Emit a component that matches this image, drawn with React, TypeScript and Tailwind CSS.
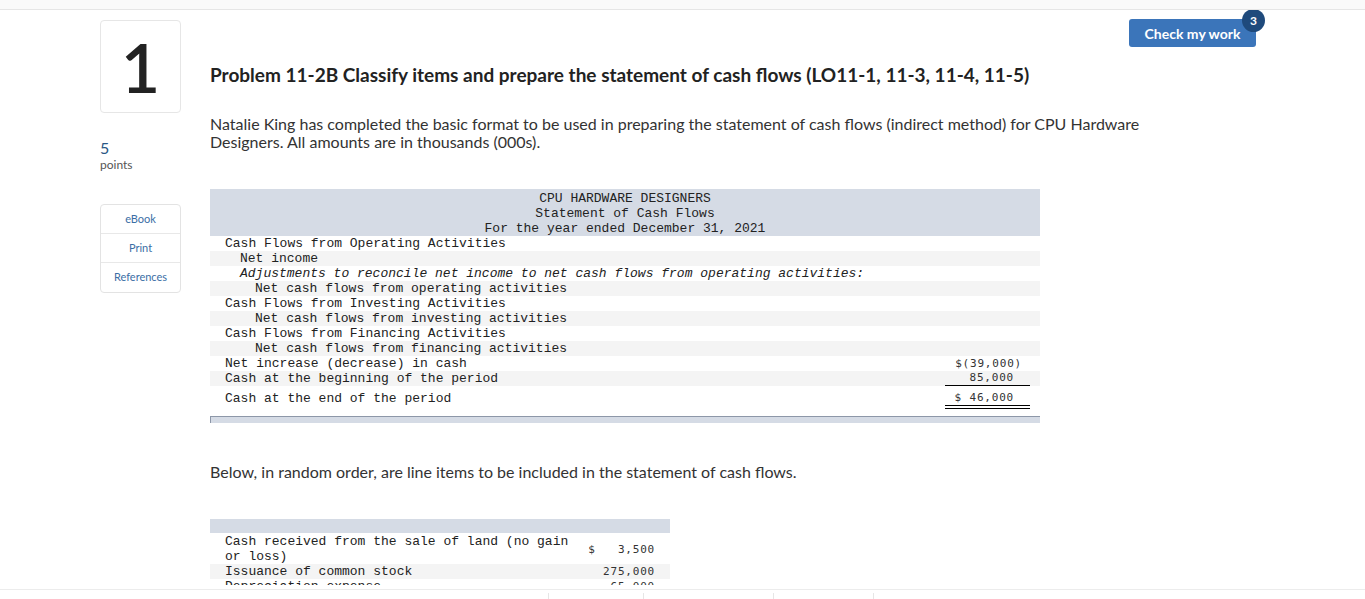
import React from 'react'

type Line = {
  label: string
  indent: number
  italic?: boolean
  amount?: string
  rule?: 'single' | 'double'
}

const statement: Line[] = [
  { label: 'Cash Flows from Operating Activities', indent: 0 },
  { label: 'Net income', indent: 1 },
  { label: 'Adjustments to reconcile net income to net cash flows from operating activities:', indent: 1, italic: true },
  { label: 'Net cash flows from operating activities', indent: 2 },
  { label: 'Cash Flows from Investing Activities', indent: 0 },
  { label: 'Net cash flows from investing activities', indent: 2 },
  { label: 'Cash Flows from Financing Activities', indent: 0 },
  { label: 'Net cash flows from financing activities', indent: 2 },
  { label: 'Net increase (decrease) in cash', indent: 0, amount: '$(39,000)' },
  { label: 'Cash at the beginning of the period', indent: 0, amount: '85,000', rule: 'single' },
  { label: 'Cash at the end of the period', indent: 0, amount: '$ 46,000', rule: 'double' },
]

const items = [
  { label: 'Cash received from the sale of land (no gain or loss)', amount: '$   3,500' },
  { label: 'Issuance of common stock', amount: '275,000' },
  { label: 'Depreciation expense', amount: '65,000' },
]

const indentClass = ['pl-[15px]', 'pl-[30px]', 'pl-[45px]']

function Amount({ value }: { value: string }) {
  // the closing paren hangs past the column, like the original
  if (value.endsWith(')')) {
    return (
      <span>
        {value.slice(0, -1)}
        <span className="-mr-[8px]">)</span>
      </span>
    )
  }
  return <span>{value}</span>
}

function Statement() {
  return (
    <div className="w-[830px] font-['Liberation_Mono',monospace] text-[13px] text-[#222]">
      <div className="h-[47px] bg-[#d5dbe5] pt-[2px] text-center leading-[15px]">
        <div>CPU HARDWARE DESIGNERS</div>
        <div>Statement of Cash Flows</div>
        <div>For the year ended December 31, 2021</div>
      </div>
      {statement.map((row, i) => {
        const tall = row.rule === 'double'
        return (
          <div
            key={row.label}
            className={`flex ${i % 2 === 1 ? 'bg-[#f4f4f4]' : 'bg-white'} ${tall ? 'h-[26px]' : 'h-[15px]'}`}
          >
            <div
              className={`flex-1 whitespace-pre leading-[15px] ${indentClass[row.indent]} ${row.italic ? 'italic' : ''} ${tall ? 'pt-[5px]' : ''}`}
            >
              {row.label}
            </div>
            <div className={`w-[85px] mr-[10px] ${tall ? 'pt-[4px]' : ''}`}>
              {row.amount && (
                <div
                  className={`box-border h-[15px] pr-[16px] text-right font-['DejaVu_Sans_Mono',monospace] text-[11px] tracking-[0.8px] text-[#333] ${row.rule === 'single' ? 'border-b border-black leading-[14px]' : 'leading-[15px]'} ${row.rule === 'double' ? 'border-b-4 border-double border-black h-[19px]' : ''}`}
                >
                  <Amount value={row.amount} />
                </div>
              )}
            </div>
          </div>
        )
      })}
      <div className="mt-[4px] h-[7px] border-t border-l border-[#8d97a8] bg-[#d5dbe5]" />
    </div>
  )
}

function LineItems() {
  return (
    <div className="w-[460px] font-['Liberation_Mono',monospace] text-[13px] leading-[15px] text-[#222]">
      <div className="h-[14px] bg-[#d5dbe5]" />
      {items.map((item, i) => (
        <div
          key={item.label}
          className={`flex items-center ${i % 2 === 1 ? 'bg-[#f4f4f4]' : 'bg-white'} ${i === 0 ? 'pt-[1px]' : ''}`}
        >
          <div className="w-[372px] pl-[15px] pr-[8px]">{item.label}</div>
          <div className="flex-1 whitespace-pre pr-[15px] text-right font-['DejaVu_Sans_Mono',monospace] text-[11px] tracking-[0.8px] text-[#333]">
            {item.amount}
          </div>
        </div>
      ))}
    </div>
  )
}

export default function App() {
  return (
    <div className="flex h-[599px] flex-col overflow-hidden bg-white font-['Lato','Open_Sans',sans-serif] text-[#222]">
      <div className="h-[10px] shrink-0 border-b border-[#e6e6e6] bg-[#fafafa]" />

      <div className="flex min-h-0 flex-1 overflow-hidden pl-[100px]">
        {/* Question sidebar */}
        <div className="w-[81px] shrink-0 pt-[10px]">
          <div className="flex h-[93px] items-center justify-center rounded-[4px] border border-[#e6e6e6]">
            <span className="text-[68px] font-semibold leading-none text-[#222]">1</span>
          </div>
          <div className="mt-[26px] text-[16px] leading-[18px] text-[#2a5785]">5</div>
          <div className="mt-[1px] text-[12px] leading-[14px] text-[#555]">points</div>
          <div className="mt-[32px] rounded-[4px] border border-[#e3e3e3] text-center text-[11px] text-[#3b6ea5]">
            <div className="h-[29px] border-b border-[#e8e8e8] leading-[28px]">eBook</div>
            <div className="h-[29px] border-b border-[#e8e8e8] leading-[28px]">Print</div>
            <div className="h-[29px] leading-[28px]">References</div>
          </div>
        </div>

        {/* Question body */}
        <div className="ml-[29px] flex-1 pr-[109px]">
          <div className="flex justify-end pt-[9px]">
            <button className="relative h-[28px] w-[127px] rounded-[3px] bg-[#3b75ba] text-[14px] font-bold text-white">
              Check my work
              <span className="absolute -right-[9px] -top-[10px] flex h-[23px] w-[23px] items-center justify-center rounded-full bg-[#1f4a7c] text-[12px] font-bold text-white">
                3
              </span>
            </button>
          </div>

          <h1 className="mt-[16px] whitespace-nowrap text-[19px] font-bold leading-[24px] text-[#222]">
            Problem 11-2B Classify items and prepare the statement of cash flows (LO11-1, 11-3, 11-4, 11-5)
          </h1>

          <p className="mt-[28px] max-w-[935px] text-[16px] leading-[18px] text-[#333]">
            Natalie King has completed the basic format to be used in preparing the statement of cash flows (indirect
            method) for CPU Hardware Designers. All amounts are in thousands (000s).
          </p>

          <div className="mt-[38px]">
            <Statement />
          </div>

          <p className="mt-[40px] text-[16px] leading-[18px] text-[#333]">
            Below, in random order, are line items to be included in the statement of cash flows.
          </p>

          <div className="mt-[38px]">
            <LineItems />
          </div>
        </div>
      </div>

      <div className="h-[14px] shrink-0 bg-white pt-[4px]">
        <div className="flex h-full items-end border-t border-[#ececec]">
          <div className="ml-[548px] h-[6px] border-l border-[#e6e6e6]" />
          <div className="ml-[94px] h-[6px] border-l border-[#e6e6e6]" />
          <div className="ml-[129px] h-[6px] border-l border-[#e6e6e6]" />
          <div className="ml-[99px] h-[6px] border-l border-[#e6e6e6]" />
        </div>
      </div>
    </div>
  )
}
